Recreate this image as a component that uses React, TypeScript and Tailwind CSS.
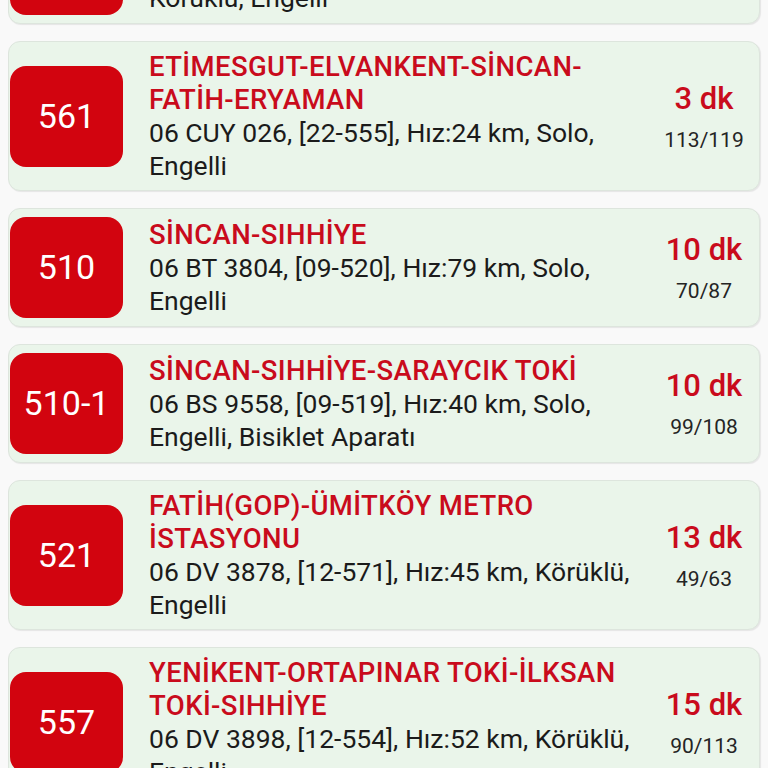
type Bus = {
  no: string;
  title: string[];
  info: string[];
  eta: string;
  stops: string;
};

const buses: Bus[] = [
  { no: '535', title: ['SİNCAN-ULUS'], info: ['06 DV 3871, [12-560], Hız:31 km,', 'Körüklü, Engelli'], eta: '1 dk', stops: '80/96' },
  { no: '561', title: ['ETİMESGUT-ELVANKENT-SİNCAN-', 'FATİH-ERYAMAN'], info: ['06 CUY 026, [22-555], Hız:24 km, Solo,', 'Engelli'], eta: '3 dk', stops: '113/119' },
  { no: '510', title: ['SİNCAN-SIHHİYE'], info: ['06 BT 3804, [09-520], Hız:79 km, Solo,', 'Engelli'], eta: '10 dk', stops: '70/87' },
  { no: '510-1', title: ['SİNCAN-SIHHİYE-SARAYCIK TOKİ'], info: ['06 BS 9558, [09-519], Hız:40 km, Solo,', 'Engelli, Bisiklet Aparatı'], eta: '10 dk', stops: '99/108' },
  { no: '521', title: ['FATİH(GOP)-ÜMİTKÖY METRO', 'İSTASYONU'], info: ['06 DV 3878, [12-571], Hız:45 km, Körüklü,', 'Engelli'], eta: '13 dk', stops: '49/63' },
  { no: '557', title: ['YENİKENT-ORTAPINAR TOKİ-İLKSAN', 'TOKİ-SIHHİYE'], info: ['06 DV 3898, [12-554], Hız:52 km, Körüklü,', 'Engelli'], eta: '15 dk', stops: '90/113' },
];

function Card({ b, first }: { b: Bus; first?: boolean }) {
  return (
    <div
      className={`flex items-center rounded-[12px] border border-[#dde5dd] bg-[#eaf5ea] py-[8px] shadow-[1px_1px_1px_rgba(0,0,0,0.08)] ${first ? '-mt-[95px]' : ''}`}
    >
      <div className="ml-[1px] flex h-[101px] w-[113px] shrink-0 items-center justify-center rounded-[16px] bg-[#d2040f] text-[34px] text-white">
        {b.no}
      </div>
      <div className="ml-[26px] min-w-0 flex-1 leading-[33px] whitespace-nowrap">
        {b.title.map((t, i) => (
          <div key={i} className="text-[27.5px] font-medium tracking-[0.4px] text-[#c90b1c]">{t}</div>
        ))}
        {b.info.map((t, i) => (
          <div key={i} className="text-[26.5px] text-[#1b1b1b]">{t}</div>
        ))}
      </div>
      <div className="flex w-[110px] shrink-0 flex-col items-center">
        <div className="text-[31px] font-medium leading-[36px] text-[#c90b1c]">{b.eta}</div>
        <div className="mt-[11px] text-[21px] leading-[24px] text-[#242424]">{b.stops}</div>
      </div>
    </div>
  );
}

export default function App() {
  return (
    <div className="h-[768px] w-[768px] overflow-hidden bg-[#f9f9f9] font-['Roboto',sans-serif]">
      <div className="flex flex-col gap-[17px] px-[8px]">
        {buses.map((b, i) => (
          <Card key={i} b={b} first={i === 0} />
        ))}
      </div>
    </div>
  );
}
